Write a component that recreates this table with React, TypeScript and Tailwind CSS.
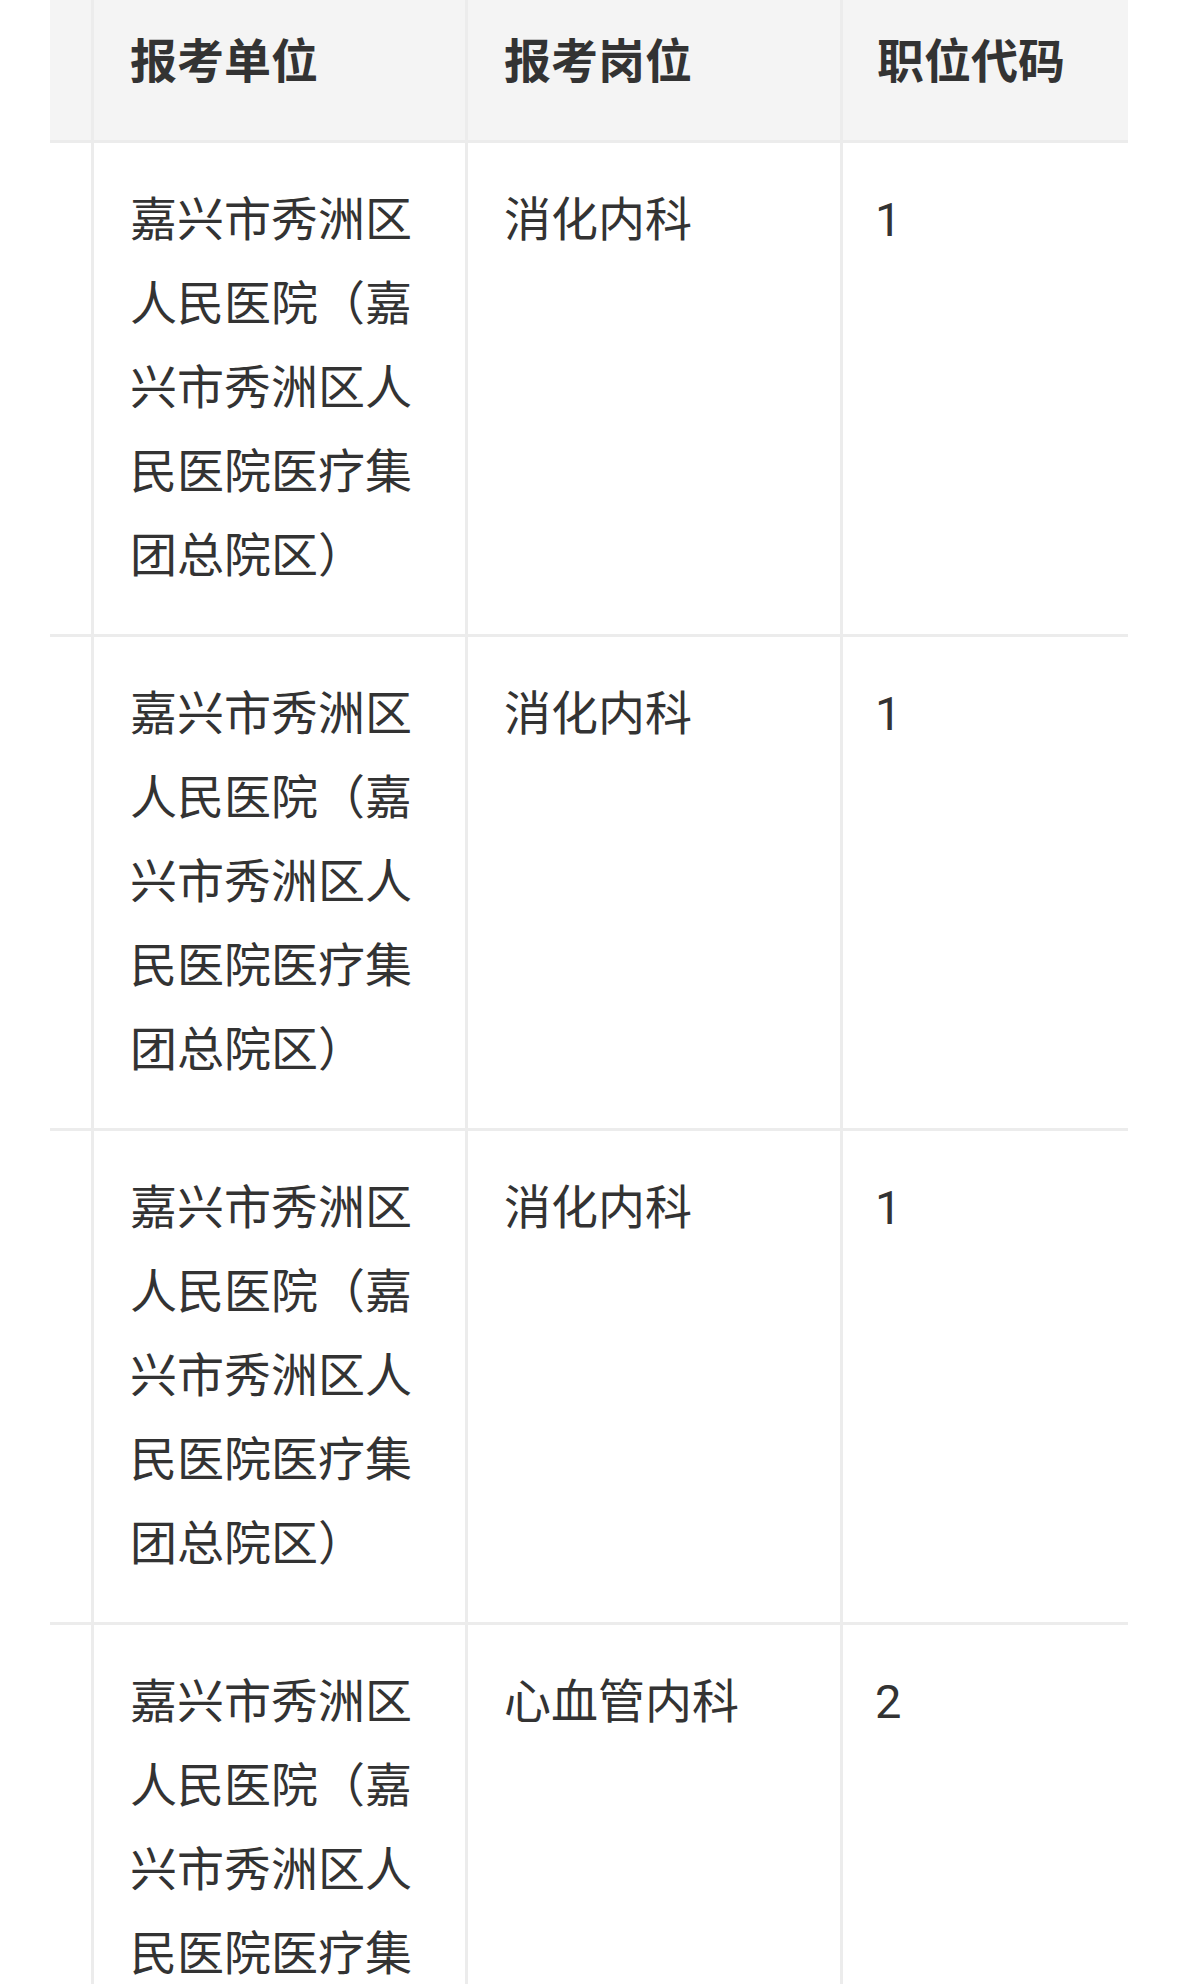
import React from "react";

const rows = [
  { unit: "嘉兴市秀洲区人民医院（嘉兴市秀洲区人民医院医疗集团总院区）", post: "消化内科", code: "1" },
  { unit: "嘉兴市秀洲区人民医院（嘉兴市秀洲区人民医院医疗集团总院区）", post: "消化内科", code: "1" },
  { unit: "嘉兴市秀洲区人民医院（嘉兴市秀洲区人民医院医疗集团总院区）", post: "消化内科", code: "1" },
  { unit: "嘉兴市秀洲区人民医院（嘉兴市秀洲区人民医院医疗集团总院区）", post: "心血管内科", code: "2" },
];

const cell = "border-r-[3px] border-[#ececec] px-[36px] pt-[35px] pb-[36px]";

export default function App() {
  return (
    <div
      className="min-h-[1984px] overflow-hidden bg-white text-[47px] leading-[84px] text-[#333333]"
      style={{ fontFamily: 'Roboto, "Noto Sans CJK SC", "Noto Sans", sans-serif' }}
    >
      <div className="ml-[50px] -mt-[15px] w-[1078px] overflow-hidden">
        {/* Header */}
        <div className="grid grid-cols-[44px_374px_375px_1fr] border-b-[3px] border-[#ececec] bg-[#f4f4f4] font-bold">
          <div className="border-r-[3px] border-[#ececec]" />
          <div className={cell}>报考单位</div>
          <div className={cell}>报考岗位</div>
          <div className="pl-[34px] pr-[36px] pt-[35px] pb-[36px] whitespace-nowrap">职位代码</div>
        </div>

        {/* Body */}
        {rows.map((r, i) => (
          <div
            key={i}
            className="grid grid-cols-[44px_374px_375px_1fr] border-b-[3px] border-[#ececec]"
          >
            <div className="border-r-[3px] border-[#ececec]" />
            <div className={cell}>{r.unit}</div>
            <div className={cell}>{r.post}</div>
            <div className="pl-[32px] pr-[36px] pt-[35px] pb-[36px]">{r.code}</div>
          </div>
        ))}
      </div>
    </div>
  );
}
